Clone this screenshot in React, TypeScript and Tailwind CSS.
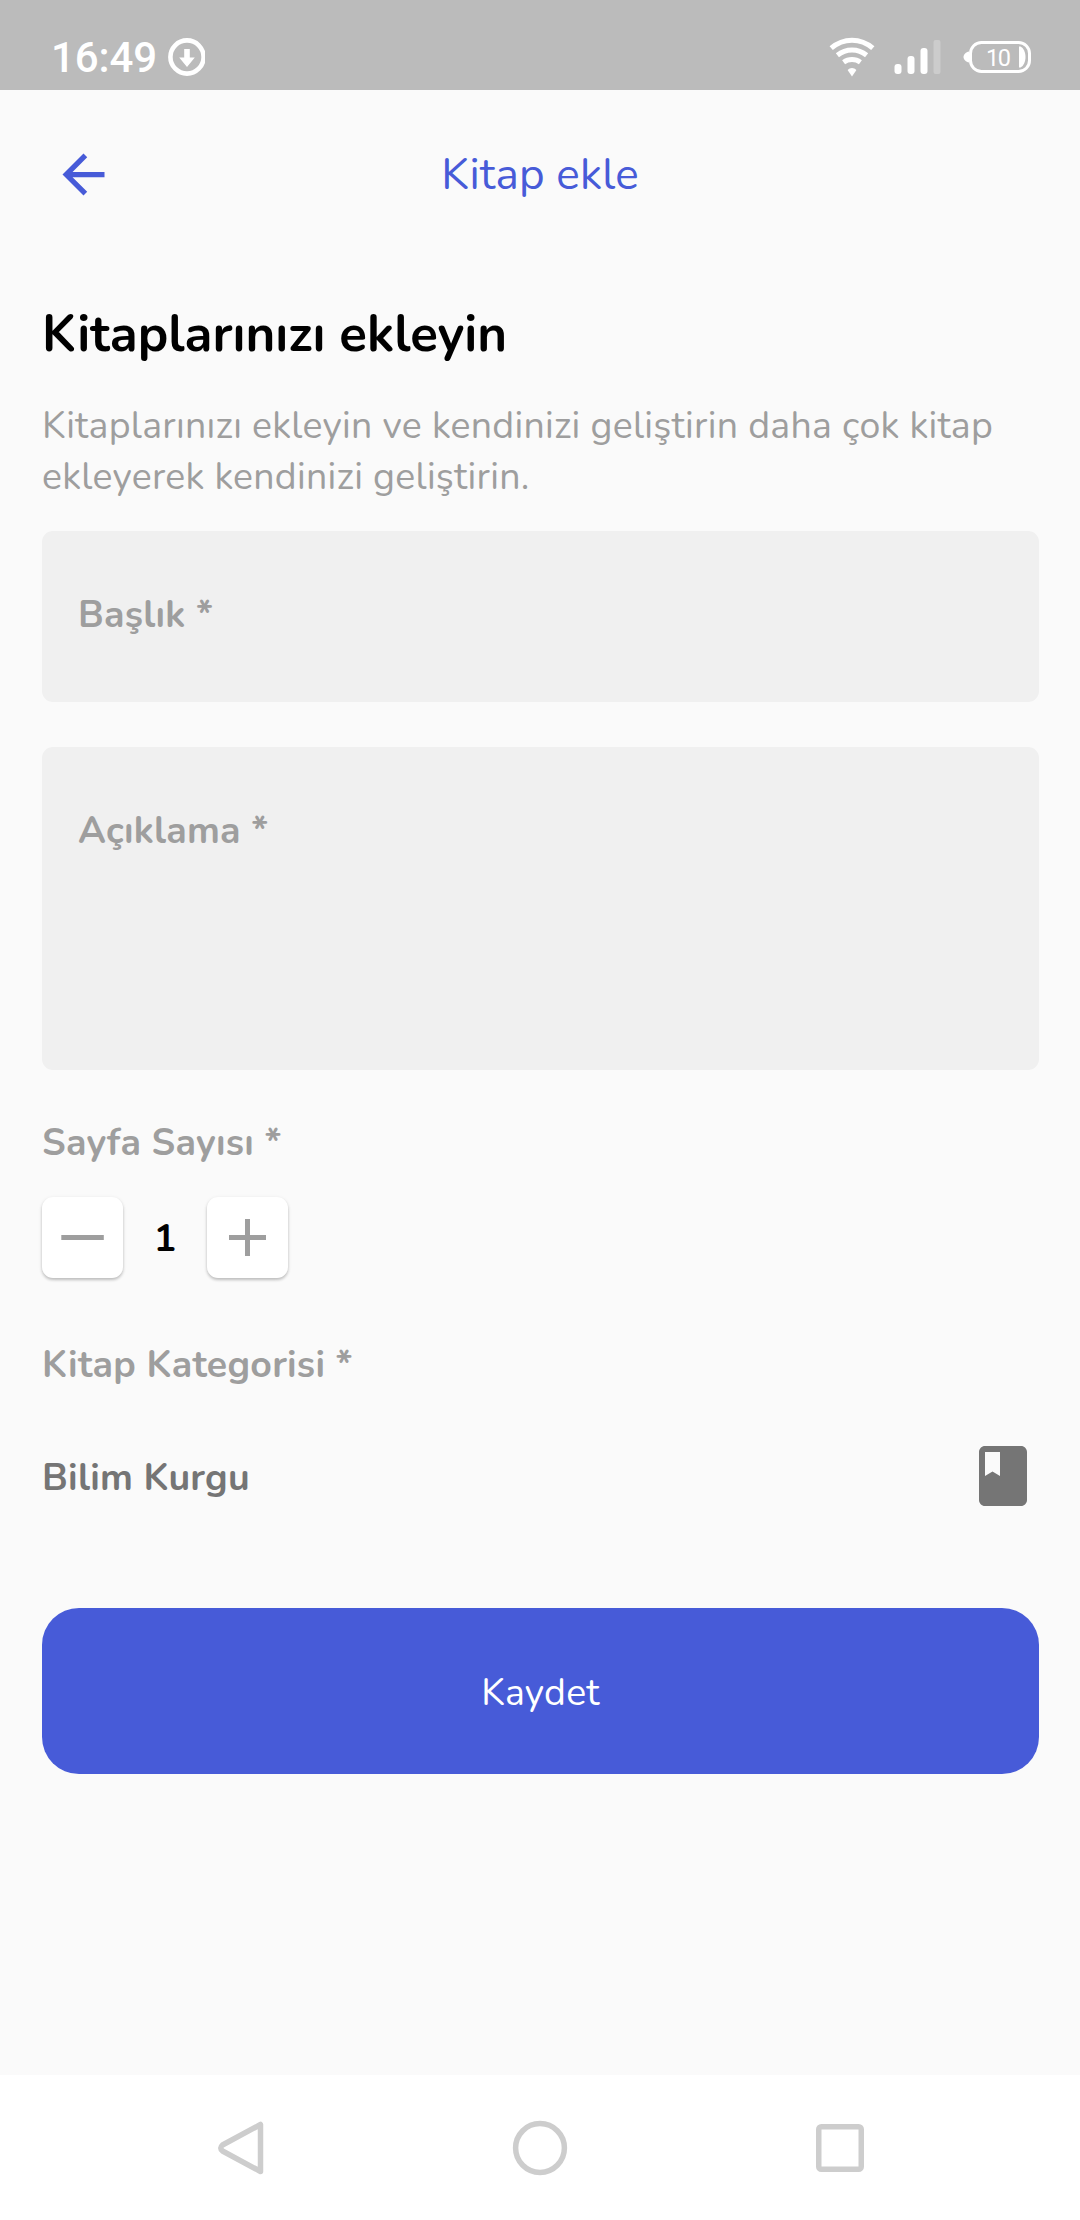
import type { ReactNode } from 'react';

function StatusBar() {
  return (
    <div className="flex h-[90px] shrink-0 items-start justify-between bg-[#bbbbbb] pl-[51px] pr-[47px] text-white">
      <div className="flex pt-[32px]">
        <span className="w-[116px] font-['Roboto',sans-serif] text-[42px] leading-[51px] font-medium tracking-[-0.1px]">16:49</span>
        <svg className="mt-[6px] h-[38px] w-[38px]" viewBox="0 0 38 38" fill="none">
          <circle cx="20" cy="19" r="16.6" stroke="white" strokeWidth="4.6" />
          <path d="M17.2 11h5.6v8.6h5L20 29l-7.8-9.4h5z" fill="white" />
        </svg>
      </div>
      <div className="flex pt-[36px]">
        <svg className="h-[42px] w-[46px]" viewBox="0 0 46 42" fill="none" stroke="white" strokeWidth="5">
          <path d="M2.2 12.2C14.5 1.6 31.5 1.6 43.8 12.2" />
          <path d="M8.4 19.2C17 12.2 29 12.2 37.6 19.2" />
          <path d="M14.6 26.2C19.5 22.6 26.5 22.6 31.4 26.2" />
          <path d="M18.6 34C21 31.3 25 31.3 27.4 34L23 40.5Z" fill="white" stroke="none" />
        </svg>
        <svg className="ml-[19px] h-[42px] w-[48px]" viewBox="0 0 48 42" fill="white">
          <rect x="0.5" y="28" width="7" height="10" rx="3" />
          <rect x="13.5" y="20" width="7" height="18" rx="3" />
          <rect x="26.5" y="12" width="7" height="26" rx="3" />
          <rect x="39.5" y="4" width="7" height="34" rx="2" opacity="0.25" />
        </svg>
        <svg className="ml-[21px] h-[42px] w-[70px]" viewBox="0 0 70 42" fill="none">
          <rect x="7.5" y="6.5" width="59" height="29" rx="11" stroke="white" strokeWidth="3" />
          <path d="M6 15.5C3 16 0.5 18.5 0.5 21s2.500 5 5.500 5.500z" fill="white" />
          <path d="M56 10.500h1.500c3 1.500 5 5.500 5 10.500s-2 9-5 10.500H56z" fill="white" />
          <text x="23" y="29.5" fill="white" fontFamily="Roboto, sans-serif" fontSize="23.5" textLength="25">
            10
          </text>
        </svg>
      </div>
    </div>
  );
}

function Header() {
  return (
    <header className="grid h-[169px] shrink-0 grid-cols-[136px_1fr_136px] items-center text-[#475bd8]">
      <button className="ml-[52px] h-[63px] w-[63px]" aria-label="Geri">
        <svg className="h-[63px] w-[63px]" viewBox="0 0 24 24" fill="currentColor">
          <path d="M20 11H7.83l5.59-5.59L12 4l-8 8 8 8 1.41-1.41L7.83 13H20v-2z" />
        </svg>
      </button>
      <h1 className="text-center text-[44px] leading-[60px] tracking-[0.2px]">Kitap ekle</h1>
    </header>
  );
}

function Label({ children }: { children: ReactNode }) {
  return <div className="text-[37.5px] leading-[51px] font-bold tracking-[0.24px] text-[#9e9e9e]">{children}</div>;
}

function StepButton({ label, children }: { label: string; children: ReactNode }) {
  return (
    <button
      aria-label={label}
      className="h-[81px] w-[81px] rounded-[11px] bg-white shadow-[0_2px_3px_rgba(0,0,0,0.2),0_1px_4px_rgba(0,0,0,0.08)]"
    >
      <svg className="h-[81px] w-[81px]" viewBox="0 0 81 81" fill="#9e9e9e">
        {children}
      </svg>
    </button>
  );
}

function NavBar() {
  return (
    <nav className="flex h-[145px] shrink-0 items-center justify-between bg-white px-[210px] pt-px">
      <svg className="h-[60px] w-[60px]" viewBox="0 0 60 60" fill="none" stroke="#cdcdcd" strokeWidth="5.5" strokeLinejoin="round">
        <path d="M50.500 6.500V53.500L12.500 33Q9 30 12.500 27Z" />
      </svg>
      <svg className="h-[60px] w-[60px]" viewBox="0 0 60 60" fill="none" stroke="#cdcdcd" strokeWidth="5.5">
        <circle cx="30" cy="30" r="24.4" />
      </svg>
      <svg className="h-[60px] w-[60px]" viewBox="0 0 60 60" fill="none" stroke="#cdcdcd" strokeWidth="5.5">
        <rect x="8.750" y="8.750" width="42.500" height="42.500" rx="2.500" />
      </svg>
    </nav>
  );
}

export default function App() {
  return (
    <div className="flex h-[2220px] w-[1080px] flex-col bg-[#fafafa] font-['Nunito','Lato',sans-serif]">
      <StatusBar />
      <Header />
      <main className="flex grow flex-col pt-[40px] pr-[41px] pl-[42px]">
        <h2 className="text-[51px] leading-[70px] font-bold text-black">Kitaplarınızı ekleyin</h2>
        <p className="mt-[31px] h-[131px] text-[37.5px] leading-[51.25px] tracking-[0.27px] text-[#9e9e9e]">
          Kitaplarınızı ekleyin ve kendinizi geliştirin daha çok kitap ekleyerek kendinizi geliştirin.
        </p>
        <div className="h-[171px] rounded-[11px] bg-[#f0f0f0] px-[36px] pt-[58px]">
          <Label>Başlık *</Label>
        </div>
        <div className="mt-[45px] h-[323px] rounded-[11px] bg-[#f0f0f0] px-[36px] pt-[58px]">
          <Label>Açıklama *</Label>
        </div>
        <div className="mt-[47px]">
          <Label>Sayfa Sayısı *</Label>
        </div>
        <div className="mt-[29px] flex items-center">
          <StepButton label="Azalt">
            <rect x="19.300" y="38" width="42.500" height="5" />
          </StepButton>
          <span className="w-[84px] pt-[2px] text-center text-[37.5px] leading-[51px] font-bold text-black">1</span>
          <StepButton label="Artır">
            <rect x="22" y="38" width="37" height="5" />
            <rect x="38" y="22" width="5" height="37" />
          </StepButton>
        </div>
        <div className="mt-[61px]">
          <Label>Kitap Kategorisi *</Label>
        </div>
        <div className="mt-[50px] flex h-[72px] items-center justify-between">
          <span className="pt-[2px] text-[37.5px] leading-[51px] font-bold tracking-[0.27px] text-[#757575]">Bilim Kurgu</span>
          <svg className="h-[72px] w-[72px]" viewBox="0 0 24 24" fill="#757575">
            <path d="M18 2H6c-1.100 0-2 .9-2 2v16c0 1.100.9 2 2 2h12c1.100 0 2-.9 2-2V4c0-1.100-.9-2-2-2zM6 4h5v8l-2.500-1.500L6 12V4z" />
          </svg>
        </div>
        <button className="mt-[96px] h-[166px] rounded-[37px] bg-[#475bd8] pt-[2px] text-[37.5px] leading-[51px] tracking-[0.24px] text-white">
          Kaydet
        </button>
      </main>
      <NavBar />
    </div>
  );
}
